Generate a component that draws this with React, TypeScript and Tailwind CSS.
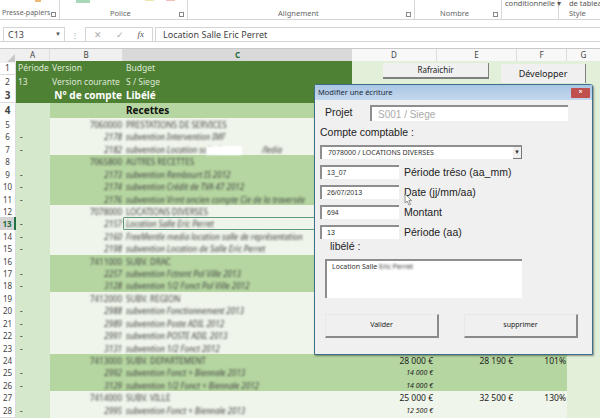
const COLS = "grid grid-cols-[16px_34px_73px_229px_85px_80px_50px_33px]";

type Row = {
  n: number;
  code?: string;
  label?: string;
  sub?: boolean;
  band: "dark" | "light";
  d?: string;
  e?: string;
  f?: string;
};

const rows: Row[] = [
  { n: 5, code: "7060000", label: "PRESTATIONS DE SERVICES", band: "light" },
  { n: 6, code: "2178", label: "subvention Intervention IMF", sub: true, band: "light" },
  { n: 7, code: "2182", label: "subvention Location salle /                    /ledia", sub: true, band: "light" },
  { n: 8, code: "7065800", label: "AUTRES RECETTES", band: "dark" },
  { n: 9, code: "2173", label: "subvention Rembourt IS 2012", sub: true, band: "dark" },
  { n: 10, code: "2174", label: "subvention Crédit de TVA 47 2012", sub: true, band: "dark" },
  { n: 11, code: "2176", label: "subvention Vrmt ancien compte Cie de la traversée", sub: true, band: "dark" },
  { n: 12, code: "7078000", label: "LOCATIONS DIVERSES", band: "light" },
  { n: 13, code: "2157", label: "Location Salle Eric Perret", sub: true, band: "light" },
  { n: 14, code: "2160", label: "FreeMentle media location salle de représentation", sub: true, band: "light" },
  { n: 15, code: "2198", label: "subvention Location de Salle Eric Perret", sub: true, band: "light" },
  { n: 16, code: "7411000", label: "SUBV. DRAC", band: "dark" },
  { n: 17, code: "2257", label: "subvention Fctnmt Pol Ville 2013", sub: true, band: "dark" },
  { n: 18, code: "3128", label: "subvention 1/2 Fonct Pol Ville 2012", sub: true, band: "dark" },
  { n: 19, code: "7412000", label: "SUBV. REGION", band: "light" },
  { n: 20, code: "2988", label: "subvention Fonctionnement 2013", sub: true, band: "light" },
  { n: 21, code: "2989", label: "subvention Poste ADIL 2012", sub: true, band: "light" },
  { n: 22, code: "2991", label: "subvention POSTE ADIL 2013", sub: true, band: "light" },
  { n: 23, code: "3131", label: "subvention 1/2 Fonct 2012", sub: true, band: "light" },
  { n: 24, code: "7413000", label: "SUBV. DEPARTEMENT", band: "dark", d: "28 000 €", e: "28 190 €", f: "101%" },
  { n: 25, code: "2992", label: "subvention Fonct + Biennale 2013", sub: true, band: "dark", d: "14 000 €" },
  { n: 26, code: "3129", label: "subvention 1/2 Fonct + Biennale 2012", sub: true, band: "dark", d: "14 000 €" },
  { n: 27, code: "7414000", label: "SUBV. VILLE", band: "light", d: "25 000 €", e: "32 500 €", f: "130%" },
  { n: 28, code: "2995", label: "subvention Fonct + Biennale 2013", sub: true, band: "light", d: "12 500 €" },
];

function RowHead({ n, active }: { n: number; active?: boolean }) {
  return (
    <div
      className={
        active
          ? "flex items-center justify-center border-r-2 border-r-[#217346] bg-[#d4d4d4] font-bold text-[#1f6b3c]"
          : "flex items-center justify-center border-r border-b border-[#dcdcdc] bg-white text-[#444444]"
      }
    >
      {n}
    </div>
  );
}

function SheetRow({ r }: { r: Row }) {
  const bg = r.band === "dark" ? "bg-[#b5d6a0]" : "bg-[#eff5ea]";
  const style = r.sub ? "italic" : "";
  return (
    <div className={`${COLS} h-[12.43px] text-[8px] leading-[13px] text-[#444444]`}>
      <RowHead n={r.n} active={r.n === 13} />
      <div className="bg-[#d5e8cc] pl-[4px] text-[#222222]">{r.sub ? "-" : ""}</div>
      <div className={`${bg} pr-[1px] text-right ${style}`}>
        <span className="inline-block blur-[1px]">{r.code}</span>
      </div>
      <div className={`${bg} overflow-hidden whitespace-pre pl-[3px] ${style}`}>
        <span className="inline-block blur-[1px]">{r.label}</span>
      </div>
      <div className={`${bg} pr-[4px] text-right text-[#222222] ${r.sub ? "text-[7px] italic" : "text-[8.5px]"}`}>{r.d}</div>
      <div className={`${bg} pr-[4px] text-right text-[8.5px] text-[#222222]`}>{r.e}</div>
      <div className={`${bg} pr-[1px] text-right text-[8.5px] text-[#222222]`}>{r.f}</div>
      <div className="bg-[#e2efd9]" />
    </div>
  );
}

function RibbonGroup({ w, label, launcher, labelClass, children }: { w: string; label: string; launcher?: boolean; labelClass: string; children?: React.ReactNode }) {
  return (
    <div className={`${w} relative flex h-full flex-col justify-end border-r border-[#d6d6d6] pb-[1px]`}>
      {children}
      <div className={`relative whitespace-nowrap text-[7.5px] leading-[10px] text-[#666666] ${labelClass}`}>
        {label}
      </div>
      {launcher && <span className="absolute right-[3px] bottom-[2px] block h-[5px] w-[5px] border border-[#888888] bg-white" />}
    </div>
  );
}

function Field({ value, label }: { value: string; label: string }) {
  return (
    <div className="flex h-[20px] items-start">
      <div className="flex h-[14px] w-[79px] items-center border-t-2 border-l-2 border-t-[#8e8e8e] border-l-[#8e8e8e] bg-white pl-[5px] text-[7px] text-[#333333]">
        {value}
      </div>
      <div className="ml-[5px] text-[10.5px] leading-[14px] text-[#222222]">{label}</div>
    </div>
  );
}

function Sunken({ className, children }: { className: string; children?: React.ReactNode }) {
  return <div className={`border-t-2 border-l-2 border-t-[#8e8e8e] border-l-[#8e8e8e] bg-white ${className}`}>{children}</div>;
}

function Raised({ className, children }: { className: string; children: React.ReactNode }) {
  return (
    <div className={`flex items-center justify-center border-r-2 border-b-2 border-t border-l border-r-[#8a8a8a] border-b-[#8a8a8a] border-t-[#e8e8e8] border-l-[#e8e8e8] bg-[#f0f0f0] ${className}`}>
      {children}
    </div>
  );
}

export default function App() {
  return (
    <div className="relative h-[420px] w-[600px] overflow-hidden bg-white font-['Noto_Sans',sans-serif]">
      {/* ribbon */}
      <div className="flex h-[20px] border-b border-[#d4d4d4] bg-white">
        <RibbonGroup w="w-[60px]" label="Presse-papiers" launcher labelClass="pl-[2px] text-[7px]">
          <span className="absolute top-0 left-[35px] h-[2px] w-[6px] bg-[#eebb77]" />
        </RibbonGroup>
        <RibbonGroup w="w-[128px]" label="Police" launcher labelClass="pl-[50px]">
          <span className="absolute top-0 left-[16px] h-[3px] w-[14px] bg-[#a8d8b8]" />
          <span className="absolute top-0 left-[85px] h-[1px] w-[9px] bg-[#f2e6a8]" />
          <span className="absolute top-0 left-[106px] h-[1px] w-[9px] bg-[#f2c0b8]" />
        </RibbonGroup>
        <RibbonGroup w="w-[227px]" label="Alignement" launcher labelClass="pl-[90px]" />
        <RibbonGroup w="w-[87px]" label="Nombre" launcher labelClass="pl-[25px]" />
        <div className="flex h-full w-[57px] flex-col border-r border-[#d6d6d6] pl-[3px] text-[7.5px] leading-[6px] text-[#555555]">
          <span className="whitespace-nowrap">conditionnelle ▾</span>
        </div>
        <div className="flex flex-1 flex-col justify-between overflow-hidden pb-[1px] pl-[10px] text-[7.5px] leading-[6px] text-[#555555]">
          <span className="whitespace-nowrap">de tablea</span>
          <span className="leading-[10px] text-[#666666]">Style</span>
        </div>
      </div>

      {/* formula bar */}
      <div className="h-[22px] border-b border-[#d4d4d4] bg-white pt-[7px] pl-[3px]">
        <div className="flex h-[15px] items-stretch text-[#444444]">
          <div className="flex w-[62px] items-center justify-between border border-[#d4d4d4] pr-[3px] pl-[4px] text-[9px]">
            <span>C13</span>
            <span className="text-[6px] text-[#555555]">▼</span>
          </div>
          <div className="flex w-[20px] items-center justify-center text-[8px] text-[#999999]">⋮</div>
          <div className="flex w-[68px] items-center justify-between border border-[#d4d4d4] px-[8px] text-[9px]">
            <span className="text-[#aaaaaa]">✕</span>
            <span className="text-[#aaaaaa]">✓</span>
            <span className="font-['Liberation_Serif',serif] italic text-[#555555]">fx</span>
          </div>
          <div className="ml-[2px] flex flex-1 items-center border-y border-l border-[#d4d4d4] pl-[7px] text-[9px] text-[#444444]">
            Location Salle Eric Perret
          </div>
        </div>
      </div>

      {/* column heads */}
      <div className={`${COLS} mt-[6px] h-[13px] border-t border-[#c8c8c8] text-[8px] leading-[12px] text-[#444444]`}>
        <div className="relative bg-[#f0f0f0]">
          <span className="absolute right-[1px] bottom-[1px] h-0 w-0 border-b-[8px] border-l-[8px] border-b-[#c8c8c8] border-l-transparent" />
        </div>
        <div className="border-r border-[#dcdcdc] bg-[#f0f0f0] text-center">A</div>
        <div className="border-r border-[#dcdcdc] bg-[#f0f0f0] text-center">B</div>
        <div className="border-b-2 border-[#217346] bg-[#d9d9d9] text-center font-bold text-[#1f6b3c]">C</div>
        <div className="border-r border-[#dcdcdc] bg-[#f8f8f8] text-center">D</div>
        <div className="border-r border-[#dcdcdc] bg-[#f8f8f8] text-center">E</div>
        <div className="border-r border-[#dcdcdc] bg-[#f8f8f8] text-center">F</div>
        <div className="bg-[#f8f8f8] text-center">G</div>
      </div>

      {/* head rows 1-4 */}
      <div className={`${COLS} h-[13.5px] text-[8.5px] leading-[13px] text-[#dfe9d8]`}>
        <RowHead n={1} />
        <div className="bg-[#4f8134] pl-[2px]">Période</div>
        <div className="bg-[#4f8134] pl-[2px]">Version</div>
        <div className="bg-[#4f8134] pl-[3px]">Budget</div>
        <div className="col-span-4 bg-[#e2efd9]" />
      </div>
      <div className={`${COLS} h-[13.5px] text-[8.5px] leading-[13px] text-[#dfe9d8]`}>
        <RowHead n={2} />
        <div className="bg-[#4f8134] pl-[2px]">13</div>
        <div className="whitespace-nowrap bg-[#4f8134] pl-[2px]">Version courante</div>
        <div className="bg-[#4f8134] pl-[3px]">S / Siege</div>
        <div className="col-span-4 bg-[#e2efd9]" />
      </div>
      <div className={`${COLS} h-[14.5px] text-[10px] leading-[14px] font-bold text-white`}>
        <RowHead n={3} />
        <div className="bg-[#4f8134]" />
        <div className="whitespace-nowrap bg-[#4f8134] pr-[1px] text-right">N° de compte</div>
        <div className="bg-[#4f8134] pl-[3px]">Libélé</div>
        <div className="col-span-4 bg-[#e2efd9]" />
      </div>
      <div className={`${COLS} h-[15.5px] text-[10px] leading-[15px] font-bold text-[#111111]`}>
        <RowHead n={4} />
        <div className="bg-[#d5e8cc]" />
        <div className="bg-[#b5d6a0]" />
        <div className="bg-[#b5d6a0] pl-[3px]">Recettes</div>
        <div className="col-span-3 bg-[#b5d6a0]" />
        <div className="bg-[#e2efd9]" />
      </div>

      {rows.map((r) => (
        <SheetRow key={r.n} r={r} />
      ))}

      {/* hidden name mask in row 7 */}
      <div className="absolute top-[146px] left-[206px] h-[9px] w-[36px] bg-white blur-[1px]" />

      {/* selected cell C13 */}
      <div className="absolute top-[217px] left-[123px] h-[13px] w-[229px] rounded-[1px] border-[1.5px] border-[#5f9a7c]" />

      {/* sheet buttons */}
      <div className="absolute top-[63px] left-[383px] flex h-[16px] w-[106px] items-center justify-center border-r border-b-2 border-r-[#7f7f7f] border-b-[#7f7f7f] bg-[#f0f0f0] text-[8px] text-[#222222]">
        Rafraichir
      </div>
      <div className="absolute top-[64px] left-[501px] flex h-[19px] w-[85px] items-center justify-center border-r border-r-[#7f7f7f] bg-[#f0f0f0] text-[9px] text-[#222222]">
        Développer
      </div>

      {/* dialog */}
      <div className="absolute top-[84px] left-[314px] flex h-[271px] w-[279px] flex-col rounded-t-[3px] border border-[#3c6f8c] bg-[#f0f0f0] shadow-[1px_1px_2px_rgba(0,0,0,0.4)]">
        <div className="flex h-[15px] items-center justify-between bg-gradient-to-b from-[#a9c6e4] to-[#c4d8ee] pr-[2px] pl-[3px] text-[7.5px] text-[#1a2a3a]">
          <span>Modifier une écriture</span>
          <span className="flex h-[10px] w-[19px] items-center justify-center rounded-[1px] bg-[#c0504d] text-[7px] font-bold text-white">×</span>
        </div>
        <div className="flex flex-1 flex-col pt-[5px] pl-[5px] font-['Liberation_Sans',sans-serif]">
          <div className="flex h-[16px] items-start">
            <div className="w-[50px] pl-[5px] text-[10.5px] leading-[14px] text-[#222222]">Projet</div>
            <Sunken className="flex h-[16px] w-[198px] items-center pl-[6px] text-[10px] text-[#aaaaaa]">S001 / Siege</Sunken>
          </div>
          <div className="mt-[2px] h-[22px] text-[10.5px] leading-[18px] text-[#222222]">Compte comptable :</div>
          <Sunken className="flex h-[14px] w-[202px] items-center justify-between pl-[6px] font-['Noto_Sans',sans-serif] text-[7px] text-[#333333]">
            <span>7078000 / LOCATIONS DIVERSES</span>
            <span className="flex h-[12px] w-[9px] items-center justify-center border-r border-b border-[#777777] bg-[#f0f0f0] text-[6px]">▼</span>
          </Sunken>
          <div className="mt-[6px] flex flex-col">
            <Field value="13_07" label="Période tréso (aa_mm)" />
            <Field value="26/07/2013" label="Date (jj/mm/aa)" />
            <Field value="694" label="Montant" />
            <Field value="13" label="Période (aa)" />
          </div>
          <div className="mt-[-7px] pl-[10px] text-[10.5px] leading-[16px] text-[#222222]">libélé :</div>
          <Sunken className="mt-[5px] ml-[5px] h-[39px] w-[197px] pt-[1px] pl-[5px] font-['Noto_Sans',sans-serif] text-[7px] leading-[10px] text-[#333333]">
            Location Salle <span className="inline-block blur-[0.8px]">Eric Perret</span>
          </Sunken>
          <div className="mt-[16px] ml-[5px] flex gap-[25px] font-['Noto_Sans',sans-serif] text-[7px] text-[#222222]">
            <Raised className="h-[24px] w-[114px]">Valider</Raised>
            <Raised className="h-[24px] w-[114px]">supprimer</Raised>
          </div>
        </div>
      </div>

      {/* mouse pointer */}
      <svg className="absolute top-[193px] left-[404px]" width="9" height="13" viewBox="0 0 9 13">
        <path d="M1 1 L1 10 L3 8 L5 12 L6.5 11.4 L4.8 7.6 L7.6 7.6 Z" fill="#ffffff" stroke="#777777" strokeWidth="0.8" />
      </svg>
    </div>
  );
}
